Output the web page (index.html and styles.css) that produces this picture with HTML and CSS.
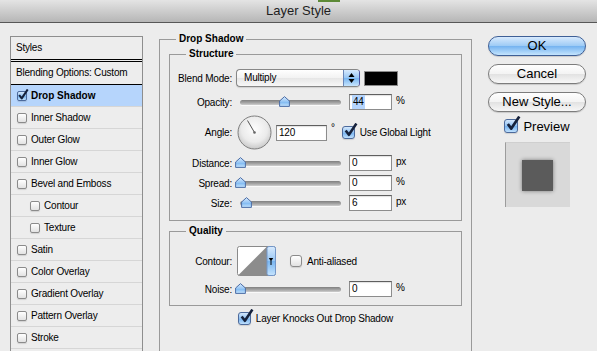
FILE: index.html
```html
<!DOCTYPE html>
<html lang="en">
<head>
    <meta charset="UTF-8">
    <meta name="viewport" content="width=device-width, initial-scale=1.0">
    <title>Layer Style</title>
    <link rel="stylesheet" href="styles.css">
</head>
<body>
    <!-- shared gradients for the aqua controls -->
    <svg class="defs" width="0" height="0">
        <defs>
            <linearGradient id="aqua" x1="0" y1="0" x2="0" y2="1">
                <stop offset="0" stop-color="#d8eafd"/>
                <stop offset="0.5" stop-color="#97c6f4"/>
                <stop offset="0.51" stop-color="#78b5f0"/>
                <stop offset="1" stop-color="#c6e4fd"/>
            </linearGradient>
            <radialGradient id="dialFill" cx="0.5" cy="0.4" r="0.6">
                <stop offset="0" stop-color="#fdfdfd"/>
                <stop offset="0.65" stop-color="#ebebeb"/>
                <stop offset="1" stop-color="#c8c8c8"/>
            </radialGradient>
        </defs>
    </svg>

    <div class="window">
        <div class="titlebar">Layer Style</div>

        <div class="content">
            <!-- effects list -->
            <div class="styles-list">
                <div class="list-head">Styles</div>
                <div class="list-blend">Blending Options: Custom</div>
                <div class="list-item selected">
                    <span class="cb small on">
                        <svg class="tick" width="12" height="12" viewBox="0 0 14 14"><path d="M2.5 7 L5.5 11 L12.5 0.5" fill="none" stroke="#16223c" stroke-width="2.4" stroke-linejoin="round"/></svg>
                    </span>
                    <b>Drop Shadow</b>
                </div>
                <div class="list-item"><span class="cb small"></span>Inner Shadow</div>
                <div class="list-item"><span class="cb small"></span>Outer Glow</div>
                <div class="list-item"><span class="cb small"></span>Inner Glow</div>
                <div class="list-item"><span class="cb small"></span>Bevel and Emboss</div>
                <div class="list-item sub"><span class="cb small"></span>Contour</div>
                <div class="list-item sub"><span class="cb small"></span>Texture</div>
                <div class="list-item"><span class="cb small"></span>Satin</div>
                <div class="list-item"><span class="cb small"></span>Color Overlay</div>
                <div class="list-item"><span class="cb small"></span>Gradient Overlay</div>
                <div class="list-item"><span class="cb small"></span>Pattern Overlay</div>
                <div class="list-item"><span class="cb small"></span>Stroke</div>
            </div>

            <!-- settings -->
            <div class="settings">
                <div class="group outer">
                    <div class="group-title">Drop Shadow</div>

                    <div class="group inner structure">
                        <div class="group-title">Structure</div>

                        <div class="row blend-row">
                            <span class="label">Blend Mode:</span>
                            <div class="select">
                                <span class="select-text">Multiply</span>
                                <span class="select-arrows">
                                    <svg width="15" height="16" viewBox="0 0 15 16"><path d="M4.5 7 L7.5 3 L10.5 7 Z M4.5 9 L10.5 9 L7.5 13 Z" fill="#000"/></svg>
                                </span>
                            </div>
                            <span class="swatch"></span>
                        </div>

                        <div class="row opacity-row">
                            <span class="label">Opacity:</span>
                            <div class="slider">
                                <svg class="thumb" style="left: 44px" width="11" height="11" viewBox="0 0 11 11"><path d="M5.5 0.6 L10.4 5 V10.4 H0.6 V5 Z" fill="url(#aqua)" stroke="#4d6ea6"/></svg>
                            </div>
                            <div class="field"><span class="sel">44</span></div>
                            <span class="unit">%</span>
                        </div>

                        <div class="row angle-row">
                            <span class="label">Angle:</span>
                            <svg class="dial" width="35" height="35" viewBox="0 0 35 35">
                                <circle cx="17.5" cy="17.5" r="16.5" fill="url(#dialFill)" stroke="#7e7e7e"/>
                                <line x1="17.5" y1="17.5" x2="10.5" y2="5.5" stroke="#555" stroke-width="1"/>
                                <circle cx="17.5" cy="17.5" r="1.3" fill="#666"/>
                            </svg>
                            <div class="field angle-field">120</div>
                            <span class="degree">°</span>
                            <span class="cb on global-cb">
                                <svg class="tick" width="15" height="15" viewBox="0 0 14 14"><path d="M2.5 7 L5.5 11 L12.5 0.5" fill="none" stroke="#16223c" stroke-width="2.4" stroke-linejoin="round"/></svg>
                            </span>
                            <span class="cb-text">Use Global Light</span>
                        </div>

                        <div class="row slider-row first">
                            <span class="label">Distance:</span>
                            <div class="slider">
                                <svg class="thumb" style="left: 0px" width="11" height="11" viewBox="0 0 11 11"><path d="M5.5 0.6 L10.4 5 V10.4 H0.6 V5 Z" fill="url(#aqua)" stroke="#4d6ea6"/></svg>
                            </div>
                            <div class="field">0</div>
                            <span class="unit">px</span>
                        </div>

                        <div class="row slider-row">
                            <span class="label">Spread:</span>
                            <div class="slider">
                                <svg class="thumb" style="left: 0px" width="11" height="11" viewBox="0 0 11 11"><path d="M5.5 0.6 L10.4 5 V10.4 H0.6 V5 Z" fill="url(#aqua)" stroke="#4d6ea6"/></svg>
                            </div>
                            <div class="field">0</div>
                            <span class="unit">%</span>
                        </div>

                        <div class="row slider-row">
                            <span class="label">Size:</span>
                            <div class="slider">
                                <svg class="thumb" style="left: 6px" width="11" height="11" viewBox="0 0 11 11"><path d="M5.5 0.6 L10.4 5 V10.4 H0.6 V5 Z" fill="url(#aqua)" stroke="#4d6ea6"/></svg>
                            </div>
                            <div class="field">6</div>
                            <span class="unit">px</span>
                        </div>
                    </div>

                    <div class="group inner quality">
                        <div class="group-title">Quality</div>

                        <div class="row contour-row">
                            <span class="label">Contour:</span>
                            <svg class="contour" width="39" height="30" viewBox="0 0 39 30">
                                <rect x="0.5" y="0.5" width="38" height="29" rx="2" fill="#fff" stroke="#8a8a8a"/>
                                <path d="M1 29.5 L30 0.5 L30 29.5 Z" fill="#8c8c8c"/>
                                <rect x="30" y="0.5" width="8.5" height="29" rx="2" fill="url(#aqua)" stroke="#7396c8"/>
                                <path d="M31.8 12 H36.2 L34 15.5 Z M33.5 15 H34.5 V19 H33.5 Z" fill="#000"/>
                            </svg>
                            <span class="cb aa-cb"></span>
                            <span class="cb-text">Anti-aliased</span>
                        </div>

                        <div class="row slider-row noise-row">
                            <span class="label">Noise:</span>
                            <div class="slider">
                                <svg class="thumb" style="left: 0px" width="11" height="11" viewBox="0 0 11 11"><path d="M5.5 0.6 L10.4 5 V10.4 H0.6 V5 Z" fill="url(#aqua)" stroke="#4d6ea6"/></svg>
                            </div>
                            <div class="field">0</div>
                            <span class="unit">%</span>
                        </div>
                    </div>

                    <div class="row knock-row">
                        <span class="cb on">
                            <svg class="tick" width="15" height="15" viewBox="0 0 14 14"><path d="M2.5 7 L5.5 11 L12.5 0.5" fill="none" stroke="#16223c" stroke-width="2.4" stroke-linejoin="round"/></svg>
                        </span>
                        <span class="cb-text">Layer Knocks Out Drop Shadow</span>
                    </div>
                </div>
            </div>

            <!-- buttons and preview -->
            <div class="buttons">
                <div class="btn default">OK</div>
                <div class="btn">Cancel</div>
                <div class="btn">New Style...</div>
                <div class="preview-row">
                    <span class="cb on preview-cb">
                        <svg class="tick" width="16" height="16" viewBox="0 0 14 14"><path d="M2.5 7 L5.5 11 L12.5 0.5" fill="none" stroke="#16223c" stroke-width="2.4" stroke-linejoin="round"/></svg>
                    </span>
                    <span>Preview</span>
                </div>
                <div class="preview-box">
                    <div class="preview-square"></div>
                </div>
            </div>
        </div>
    </div>
</body>
</html>
```

FILE: styles.css
```css
body {
    margin: 0;
    font-family: "Liberation Sans", Arial, sans-serif;
    font-size: 10px;
    letter-spacing: -0.2px;
    color: #000;
    background: #ececec;
}

.defs {
    position: absolute;
}

.window {
    width: 597px;
    height: 351px;
    overflow: hidden;
    background: #ececec;
}

.titlebar {
    position: relative;
    height: 22px;
    line-height: 22px;
    border-bottom: 1px solid #575757;
    background: linear-gradient(#e4e4e4, #b6b6b6);
    text-align: center;
    font-size: 13px;
    letter-spacing: 0;
    color: #1e1e1e;
}

/* bit of a window behind, peeking over the title bar */
.titlebar::before {
    content: "";
    position: absolute;
    left: 318px;
    top: 0;
    width: 22px;
    height: 2px;
    background: #5d8a37;
}

.content {
    display: flex;
    align-items: flex-start;
    padding-left: 10px;
}

/* left list */
.styles-list {
    width: 131px;
    height: 330px;
    margin-top: 13px;
    border: 1px solid #8e8e8e;
    background: #ededed;
}

.list-head {
    height: 22px;
    line-height: 22px;
    padding-left: 5px;
    border-bottom: 3px double #000;
}

.list-blend {
    height: 22px;
    line-height: 22px;
    padding-left: 5px;
    border-bottom: 1px solid #000;
}

.list-item {
    display: flex;
    align-items: center;
    gap: 4px;
    height: 21px;
    padding-left: 6px;
    border-bottom: 1px solid #d6d6d6;
}

.list-item.sub {
    padding-left: 19px;
}

.list-item.selected {
    background: #b6d5fc;
}

.list-item b {
    letter-spacing: 0;
}

/* checkboxes */
.cb {
    position: relative;
    flex: none;
    box-sizing: border-box;
    width: 13px;
    height: 13px;
    border: 1px solid #8b8b8b;
    border-radius: 3px;
    background: linear-gradient(#ffffff, #e2e2e2);
    box-shadow: 0 1px 1px rgba(0, 0, 0, 0.12);
}

.cb.small {
    width: 10px;
    height: 10px;
    border-radius: 2px;
}

.cb.on {
    border-color: #4c6a9c;
    background: linear-gradient(#d3e7fc, #92c3f3 50%, #73b1ef 51%, #bfe0fd);
}

.tick {
    position: absolute;
    left: 0;
    top: -4px;
}

.cb.small .tick {
    top: -3px;
    left: -1px;
}

.cb-text {
    margin-left: 5px;
}

/* settings groups */
.settings {
    width: 313px;
    margin-left: 16px;
    margin-top: 16px;
}

.group {
    border: 1px solid #9a9a9a;
}

.outer {
    height: 330px;
    padding: 0 9px;
}

.group-title {
    width: fit-content;
    margin: -7px 0 0 7px;
    padding: 0 3px;
    line-height: 12px;
    font-weight: bold;
    letter-spacing: 0;
    background: #ececec;
}

.inner .group-title {
    margin-left: 16px;
}

.structure {
    margin-top: 9px;
    padding-bottom: 9px;
}

.quality {
    margin-top: 10px;
    padding-bottom: 8px;
}

.row {
    display: flex;
    align-items: center;
    height: 16px;
}

.label {
    width: 62px;
    margin-right: 4px;
    text-align: right;
}

.blend-row {
    height: 18px;
    margin-top: 9px;
}

.opacity-row {
    margin-top: 7px;
}

.angle-row {
    height: 35px;
    margin-top: 5px;
}

.slider-row {
    margin-top: 4px;
}

.slider-row.first {
    margin-top: 5px;
}

.contour-row {
    height: 30px;
    margin-top: 9px;
}

.noise-row {
    margin-top: 5px;
}

.knock-row {
    justify-content: center;
    height: 13px;
    margin-top: 6px;
}

/* select */
.select {
    display: flex;
    box-sizing: border-box;
    width: 124px;
    height: 18px;
    border: 1px solid #878787;
    border-right-color: #4a4f9c;
    border-radius: 4px;
    background: linear-gradient(#ffffff, #f2f2f2 50%, #e6e6e6 51%, #f7f7f7);
    overflow: hidden;
    box-shadow: 0 1px 1px rgba(0, 0, 0, 0.12);
}

.select-text {
    flex: 1;
    padding-left: 7px;
    line-height: 16px;
}

.select-arrows {
    width: 15px;
    border-left: 1px solid #6a86b8;
    background: linear-gradient(#d8eafd, #97c6f4 50%, #78b5f0 51%, #c6e4fd);
}

.select-arrows svg {
    display: block;
}

.swatch {
    box-sizing: border-box;
    width: 34px;
    height: 15px;
    margin-left: 4px;
    border: 1px solid #8a8a8a;
    background: #000;
}

/* sliders and fields */
.slider {
    position: relative;
    width: 101px;
    height: 5px;
    margin-left: 4px;
    margin-right: 8px;
    border-radius: 3px;
    background: linear-gradient(#7f7f7f, #a9a9a9 60%, #cfcfcf);
    box-shadow: 0 1px 0 rgba(255, 255, 255, 0.7);
}

.thumb {
    position: absolute;
    top: -4px;
    margin-left: -5px;
}

.field {
    box-sizing: border-box;
    width: 43px;
    height: 16px;
    padding-left: 2px;
    border: 1px solid #8c8c8c;
    border-top-color: #5f5f5f;
    background: #fff;
    line-height: 14px;
    box-shadow: inset 0 1px 1px rgba(0, 0, 0, 0.12);
}

.sel {
    display: inline-block;
    padding: 0 1px;
    background: #b5d5fd;
}

.unit {
    margin-left: 4px;
    margin-top: -3px;
}

.dial {
    flex: none;
    margin-left: 1px;
}

.angle-field {
    width: 51px;
    margin-left: 4px;
}

.degree {
    align-self: flex-start;
    margin-top: 7px;
    margin-left: 4px;
}

.global-cb {
    margin-left: 7px;
}

.contour {
    flex: none;
    margin-left: 1px;
}

.aa-cb {
    width: 12px;
    height: 12px;
    margin-left: 14px;
}

/* right column */
.buttons {
    display: flex;
    flex-direction: column;
    align-items: center;
    width: 98px;
    margin-left: 16px;
    margin-top: 13px;
}

.btn {
    box-sizing: border-box;
    width: 98px;
    height: 20px;
    margin-bottom: 8px;
    border: 1px solid #7c7c7c;
    border-radius: 10px;
    background: linear-gradient(#fefefe, #f3f3f3 50%, #e2e2e2 51%, #f7f7f7);
    box-shadow: 0 1px 1px rgba(0, 0, 0, 0.15);
    font-size: 13px;
    letter-spacing: 0;
    line-height: 18px;
    text-align: center;
}

.btn.default {
    border-color: #3e5f96;
    background: linear-gradient(#d8eafd, #9ccaf5 50%, #74b3f0 51%, #c4e4fd);
}

.preview-row {
    display: flex;
    align-items: center;
    gap: 5px;
    height: 14px;
    margin-top: -1px;
    font-size: 13px;
    letter-spacing: 0;
}

.preview-cb {
    width: 14px;
    height: 14px;
}

.preview-box {
    display: flex;
    align-items: center;
    justify-content: center;
    box-sizing: border-box;
    width: 65px;
    height: 65px;
    margin-top: 9px;
    border-left: 1px solid #9c9c9c;
    border-top: 1px solid #cfcfcf;
    background: #d9d9d9;
}

.preview-square {
    width: 31px;
    height: 31px;
    background: #5b5b5b;
    box-shadow: 0 0 4px rgba(0, 0, 0, 0.45);
}
```
